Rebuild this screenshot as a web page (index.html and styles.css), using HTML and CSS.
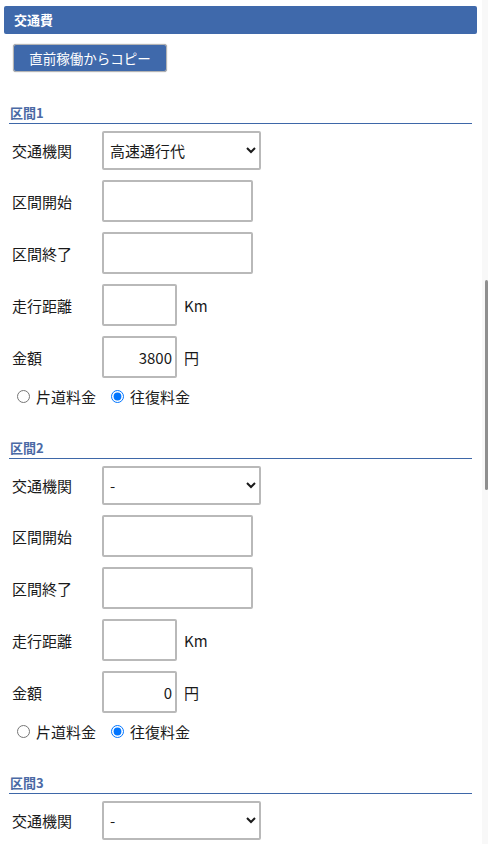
FILE: index.html
```html
<!DOCTYPE html>
<html lang="ja">
<head>
<meta charset="utf-8">
<title>交通費</title>
<link rel="stylesheet" href="styles.css">
</head>
<body>
<div class="page">
  <div class="panel-header">交通費</div>
  <div class="toolbar"><button class="btn-copy" type="button">直前稼働からコピー</button></div>

  <section class="segment">
    <h3 class="segment-title">区間1</h3>
    <div class="row">
      <label class="row-label">交通機関</label>
      <select class="ctl-select"><option>高速通行代</option><option>-</option></select>
    </div>
    <div class="row">
      <label class="row-label">区間開始</label>
      <input class="ctl-text" type="text">
    </div>
    <div class="row">
      <label class="row-label">区間終了</label>
      <input class="ctl-text" type="text">
    </div>
    <div class="row">
      <label class="row-label">走行距離</label>
      <input class="ctl-num" type="text">
      <span class="unit">Km</span>
    </div>
    <div class="row">
      <label class="row-label">金額</label>
      <input class="ctl-num" type="text" value="3800">
      <span class="unit">円</span>
    </div>
    <div class="radios">
      <label class="opt"><input type="radio" name="f1">片道料金</label>
      <label class="opt"><input type="radio" name="f1" checked>往復料金</label>
    </div>
  </section>

  <section class="segment">
    <h3 class="segment-title">区間2</h3>
    <div class="row">
      <label class="row-label">交通機関</label>
      <select class="ctl-select"><option>-</option><option>高速通行代</option></select>
    </div>
    <div class="row">
      <label class="row-label">区間開始</label>
      <input class="ctl-text" type="text">
    </div>
    <div class="row">
      <label class="row-label">区間終了</label>
      <input class="ctl-text" type="text">
    </div>
    <div class="row">
      <label class="row-label">走行距離</label>
      <input class="ctl-num" type="text">
      <span class="unit">Km</span>
    </div>
    <div class="row">
      <label class="row-label">金額</label>
      <input class="ctl-num" type="text" value="0">
      <span class="unit">円</span>
    </div>
    <div class="radios">
      <label class="opt"><input type="radio" name="f2">片道料金</label>
      <label class="opt"><input type="radio" name="f2" checked>往復料金</label>
    </div>
  </section>

  <section class="segment">
    <h3 class="segment-title">区間3</h3>
    <div class="row">
      <label class="row-label">交通機関</label>
      <select class="ctl-select"><option>-</option><option>高速通行代</option></select>
    </div>
  </section>
</div>
<div class="scroll-track"><div class="scroll-thumb"></div></div>
</body>
</html>
```
FILE: styles.css
```css
html, body {
  margin: 0;
  padding: 0;
  height: 100%;
  overflow: hidden;
  background: #ffffff;
}
body {
  font-family: "Noto Sans CJK JP", "Noto Sans", sans-serif;
  color: #1a1a1a;
  font-size: 15px;
}
.page {
  width: 482px;
  padding-top: 6px;
}
.panel-header {
  margin: 0 5px 0 4px;
  height: 28px;
  line-height: 28px;
  background: #3f69ab;
  color: #ffffff;
  font-weight: bold;
  font-size: 13px;
  padding-left: 10px;
  border-radius: 2px;
}
.toolbar {
  padding: 10px 0 0 13px;
  display: flex;
}
.btn-copy {
  width: 154px;
  height: 28px;
  background: #3f69ab;
  color: #ffffff;
  border: 1px solid #b4b4b4;
  border-radius: 3px;
  font-family: inherit;
  font-size: 13.5px;
  padding: 0;
  box-shadow: 0 0 1px #888;
}
.segment {
  margin-top: 33px;
}
.segment-title {
  margin: 0 10px 0 9px;
  padding: 0 0 2px 1px;
  font-size: 13px;
  line-height: 16px;
  font-weight: bold;
  color: #4b6aa5;
  border-bottom: 1px solid #3e67a8;
}
.row {
  display: flex;
  align-items: center;
  padding-left: 12px;
  margin-top: 10px;
}
.segment-title + .row {
  margin-top: 7px;
}
.row-label {
  width: 90px;
  flex: none;
}
.ctl-select {
  width: 159px;
  height: 39px;
  border: 2px solid #b9b9b9;
  border-radius: 2px;
  background: #ffffff;
  font-family: inherit;
  font-size: 15px;
  color: #1a1a1a;
  padding: 0 2px;
}
.ctl-text, .ctl-num {
  height: 42px;
  box-sizing: border-box;
  border: 2px solid #b9b9b9;
  border-radius: 2px;
  font-family: inherit;
  font-size: 15px;
  color: #1a1a1a;
  padding: 0 3px;
  margin: 0;
}
.ctl-text {
  width: 151px;
}
.ctl-num {
  width: 75px;
  text-align: right;
}
.unit {
  margin-left: 7px;
}
.radios {
  display: flex;
  align-items: center;
  padding-left: 12px;
  margin-top: 9px;
  height: 19px;
}
.segment:not(:first-of-type) {
  margin-top: 34px;
}
.opt {
  display: flex;
  align-items: center;
  margin-right: 10px;
}
.opt input {
  margin: 0 6px 0 5px;
  width: 13px;
  height: 13px;
}
.scroll-track {
  position: fixed;
  top: 0;
  right: 0;
  width: 6px;
  height: 100%;
  background: #f8f8f8;
}
.scroll-thumb {
  position: absolute;
  top: 280px;
  right: 0;
  width: 3px;
  height: 210px;
  border-radius: 2px;
  background: #8f8f8f;
}
```
